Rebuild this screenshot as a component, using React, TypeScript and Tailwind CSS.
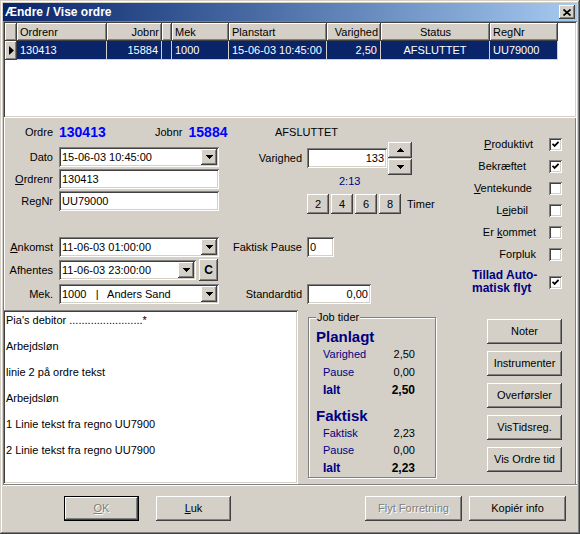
import React from "react";

const RAISED =
  "shadow-[inset_-1px_-1px_#404040,inset_1px_1px_#ffffff,inset_-2px_-2px_#808080,inset_2px_2px_#d4d0c8]";
const SUNKEN =
  "shadow-[inset_1px_1px_#808080,inset_-1px_-1px_#ffffff,inset_2px_2px_#404040,inset_-2px_-2px_#d4d0c8]";
const HEAD =
  "shadow-[inset_-1px_-1px_#404040,inset_1px_1px_#ffffff,inset_-2px_-2px_#808080]";

function Arrow({ up = false }: { up?: boolean }) {
  return (
    <svg width="7" height="4" viewBox="0 0 7 4" shapeRendering="crispEdges">
      <path d={up ? "M3.5 0L7 4H0z" : "M0 0h7L3.5 4z"} fill="#000" />
    </svg>
  );
}

function Btn({
  children,
  className = "",
  disabled = false,
}: {
  children: React.ReactNode;
  className?: string;
  disabled?: boolean;
}) {
  return (
    <div
      className={`flex items-center justify-center bg-[#d4d0c8] ${RAISED} ${
        disabled ? "text-[#808080] [text-shadow:1px_1px_0_#ffffff]" : "text-black"
      } ${className}`}
    >
      {children}
    </div>
  );
}

function Combo({ value, className }: { value: string; className: string }) {
  return (
    <div className={`flex items-center h-[20px] bg-white ${SUNKEN} ${className}`}>
      <span className="flex-1 pl-[3px] whitespace-pre overflow-hidden">{value}</span>
      <div className={`w-[16px] h-[16px] mr-[2px] flex items-center justify-center bg-[#d4d0c8] ${RAISED}`}>
        <Arrow />
      </div>
    </div>
  );
}

function Text({ value, className, right = false }: { value: string; className: string; right?: boolean }) {
  return (
    <div
      className={`flex items-center h-[20px] bg-white px-[3px] ${SUNKEN} ${
        right ? "justify-end" : ""
      } ${className}`}
    >
      {value}
    </div>
  );
}

function Check({ on }: { on: boolean }) {
  return (
    <div className={`w-[13px] h-[13px] bg-white flex items-center justify-center ${SUNKEN}`}>
      {on && (
        <svg width="7" height="7" viewBox="0 0 7 7">
          <path d="M0.5 2.8L2.6 4.9L6.6 0.9" stroke="#000" strokeWidth="1.8" fill="none" />
        </svg>
      )}
    </div>
  );
}

const columns = [
  { w: "w-[90px]", head: "Ordrenr", val: "130413", align: "justify-start" },
  { w: "w-[55px]", head: "Jobnr", val: "15884", align: "justify-end" },
  { w: "w-[10px]", head: "", val: "", align: "justify-start" },
  { w: "w-[57px]", head: "Mek", val: "1000", align: "justify-start" },
  { w: "w-[98px]", head: "Planstart", val: "15-06-03 10:45:00", align: "justify-start" },
  { w: "w-[54px]", head: "Varighed", val: "2,50", align: "justify-end" },
  { w: "w-[109px]", head: "Status", val: "AFSLUTTET", align: "justify-center" },
  { w: "w-[68px]", head: "RegNr", val: "UU79000", align: "justify-start" },
];

const checks = [
  { label: <><u>P</u>roduktivt</>, on: true, mr: "mr-[16px]" },
  { label: <>Bekræftet</>, on: true, mr: "mr-[23px]" },
  { label: <><u>V</u>entekunde</>, on: false, mr: "mr-[17px]" },
  { label: <>L<u>e</u>jebil</>, on: false, mr: "mr-[21px]" },
  { label: <>Er <u>k</u>ommet</>, on: false, mr: "mr-[13px]" },
  { label: <>Forpluk</>, on: false, mr: "mr-[13px]" },
];

const memo = [
  "Pia's debitor ........................*",
  "Arbejdsløn",
  "linie 2 på ordre tekst",
  "Arbejdsløn",
  "1 Linie tekst fra regno UU7900",
  "2 Linie tekst fra regno UU7900",
];

export default function App() {
  return (
    <div className="w-[580px] h-[534px] bg-[#d4d0c8] p-[3px] flex flex-col font-['Liberation_Sans',Arial,sans-serif] text-[11px] text-black leading-none overflow-hidden shadow-[inset_-1px_-1px_#404040,inset_1px_1px_#d4d0c8,inset_-2px_-2px_#808080,inset_2px_2px_#ffffff]">
      {/* title bar */}
      <div className="h-[18px] shrink-0 flex items-center px-[2px] bg-linear-to-r from-[#0a246a] to-[#a6caf0]">
        <span className="text-white font-bold text-[12px]">Ændre / Vise ordre</span>
        <div className={`ml-auto w-[16px] h-[14px] flex items-center justify-center bg-[#d4d0c8] ${RAISED}`}>
          <svg width="8" height="7" viewBox="0 0 8 7">
            <path d="M0.5 0.5L7.5 6.5M7.5 0.5L0.5 6.5" stroke="#000" strokeWidth="1.7" />
          </svg>
        </div>
      </div>

      {/* grid */}
      <div className={`h-[97px] shrink-0 bg-white p-[2px] flex flex-col ${SUNKEN}`}>
        <div className="flex h-[18px]">
          <div className={`w-[12px] bg-[#d4d0c8] ${HEAD}`} />
          {columns.map((c, i) => (
            <div key={i} className={`${c.w} flex items-center px-[3px] bg-[#d4d0c8] ${c.align} ${HEAD}`}>
              {c.head}
            </div>
          ))}
        </div>
        <div className="flex h-[19px]">
          <div className={`w-[12px] bg-[#d4d0c8] flex items-center justify-center ${HEAD}`}>
            <svg width="5" height="9" viewBox="0 0 5 9">
              <path d="M0 0L5 4.5L0 9z" fill="#000" />
            </svg>
          </div>
          {columns.map((c, i) => (
            <div
              key={i}
              className={`${c.w} flex items-center px-[3px] bg-[#0a246a] text-white border-r border-b border-[#d4d0c8] ${c.align}`}
            >
              {c.val}
            </div>
          ))}
        </div>
      </div>

      {/* main panel */}
      <div className="h-[366px] shrink-0 flex flex-col shadow-[inset_1px_0_#808080,inset_2px_0_#ffffff,inset_-1px_0_#ffffff,inset_-2px_0_#808080]">
        <div className="flex h-[186px]">
          <div className="w-[437px] flex flex-col pt-[6px]">
            <div className="flex">
              {/* left column */}
              <div className="w-[227px] flex flex-col">
                <div className="h-[16px] flex items-center">
                  <span className="w-[50px] text-right">Ordre</span>
                  <span className="ml-[6px] w-[96px] font-bold text-[14px] text-[#0000ff]">130413</span>
                  <span>Jobnr</span>
                  <span className="ml-[6px] font-bold text-[14px] text-[#0000ff]">15884</span>
                </div>
                <div className="mt-[7px] h-[20px] flex items-center">
                  <span className="w-[50px] text-right">Dato</span>
                  <Combo value="15-06-03 10:45:00" className="ml-[6px] w-[160px]" />
                </div>
                <div className="mt-[2px] h-[20px] flex items-center">
                  <span className="w-[50px] text-right">
                    <u>O</u>rdrenr
                  </span>
                  <Text value="130413" className="ml-[6px] w-[160px]" />
                </div>
                <div className="mt-[2px] h-[20px] flex items-center">
                  <span className="w-[50px] text-right">RegNr</span>
                  <Text value="UU79000" className="ml-[6px] w-[160px]" />
                </div>
              </div>
              {/* middle column */}
              <div className="flex flex-col">
                <div className="h-[16px] flex items-center pl-[45px]">AFSLUTTET</div>
                <div className="mt-[1px] h-[34px] flex items-center">
                  <span className="w-[72px] text-right">Varighed</span>
                  <Text value="133" right className="ml-[5px] w-[80px]" />
                  <div className="ml-[1px] w-[24px] flex flex-col gap-[1px]">
                    <Btn className="h-[16px]">
                      <Arrow up />
                    </Btn>
                    <Btn className="h-[16px]">
                      <Arrow />
                    </Btn>
                  </div>
                </div>
                <div className="h-[12px] flex items-center pl-[109px] text-[#000080]">2:13</div>
                <div className="mt-[7px] h-[20px] flex items-center pl-[77px] gap-[2px]">
                  {["2", "4", "6", "8"].map((n) => (
                    <Btn key={n} className="w-[22px] h-[20px]">
                      {n}
                    </Btn>
                  ))}
                  <span className="ml-[4px]">Timer</span>
                </div>
              </div>
            </div>

            <div className="mt-[23px] h-[20px] flex items-center">
              <span className="w-[50px] text-right">
                <u>A</u>nkomst
              </span>
              <Combo value="11-06-03 01:00:00" className="ml-[6px] w-[160px]" />
              <span className="ml-[11px] w-[72px] text-right">Faktisk Pause</span>
              <Text value="0" className="ml-[5px] w-[27px]" />
            </div>
            <div className="mt-[2px] h-[22px] flex items-center">
              <span className="w-[50px] text-right">Afhentes</span>
              <Combo value="11-06-03 23:00:00" className="ml-[6px] w-[137px]" />
              <Btn className="ml-[3px] w-[19px] h-[22px] font-bold text-[12px]">C</Btn>
            </div>
            <div className="mt-[3px] h-[20px] flex items-center">
              <span className="w-[50px] text-right">Mek.</span>
              <Combo value="1000   |   Anders Sand" className="ml-[6px] w-[160px]" />
              <span className="ml-[11px] w-[72px] text-right">Standardtid</span>
              <Text value="0,00" right className="ml-[5px] w-[64px]" />
            </div>
          </div>

          {/* checkbox column */}
          <div className="flex-1 flex flex-col pt-[15px]">
            {checks.map((c, i) => (
              <div key={i} className="h-[22px] flex items-center justify-end pr-[15px]">
                <span className={c.mr}>{c.label}</span>
                <Check on={c.on} />
              </div>
            ))}
            <div className="mt-[4px] h-[26px] flex items-center pl-[32px] pr-[15px]">
              <div className="flex-1 font-bold text-[12px] leading-[13px] text-[#000080]">
                Tillad Auto-
                <br />
                matisk flyt
              </div>
              <Check on />
            </div>
          </div>
        </div>

        <div className="mt-[6px] h-[174px] flex">
          <div className={`w-[295px] h-[174px] bg-white pt-[2px] pl-[3px] flex flex-col gap-[10px] ${SUNKEN}`}>
            {memo.map((m, i) => (
              <div key={i} className="h-[16px] flex items-center">
                {m}
              </div>
            ))}
          </div>

          <div className="relative ml-[10px] mt-[7px] w-[128px] h-[161px] border border-[#808080] shadow-[inset_1px_1px_#ffffff,1px_1px_#ffffff] flex flex-col pt-[9px]">
            <span className="absolute -top-[6px] left-[7px] px-[1px] bg-[#d4d0c8]">Job tider</span>
            <div className="h-[18px] flex items-center pl-[7px] font-bold text-[15px] text-[#000080]">Planlagt</div>
            <div className="h-[18px] flex items-center justify-between pl-[14px] pr-[20px]">
              <span className="text-[#000080]">Varighed</span>
              <span>2,50</span>
            </div>
            <div className="h-[18px] flex items-center justify-between pl-[14px] pr-[20px]">
              <span className="text-[#000080]">Pause</span>
              <span>0,00</span>
            </div>
            <div className="h-[18px] flex items-center justify-between pl-[14px] pr-[20px] font-bold text-[12px]">
              <span className="text-[#000080]">Ialt</span>
              <span>2,50</span>
            </div>
            <div className="mt-[7px] h-[18px] flex items-center pl-[7px] font-bold text-[15px] text-[#000080]">Faktisk</div>
            <div className="h-[18px] flex items-center justify-between pl-[14px] pr-[20px]">
              <span className="text-[#000080]">Faktisk</span>
              <span>2,23</span>
            </div>
            <div className="h-[17px] flex items-center justify-between pl-[14px] pr-[20px]">
              <span className="text-[#000080]">Pause</span>
              <span>0,00</span>
            </div>
            <div className="h-[17px] flex items-center justify-between pl-[14px] pr-[20px] font-bold text-[12px]">
              <span className="text-[#000080]">Ialt</span>
              <span>2,23</span>
            </div>
          </div>

          <div className="ml-[51px] mt-[9px] w-[75px] flex flex-col gap-[7px]">
            {["Noter", "Instrumenter", "Overførsler", "VisTidsreg.", "Vis Ordre tid"].map((b) => (
              <Btn key={b} className="h-[25px]">
                {b}
              </Btn>
            ))}
          </div>
        </div>
      </div>

      <div className="h-[2px] shrink-0 border-t border-b border-t-[#808080] border-b-white" />

      {/* bottom buttons */}
      <div className="h-[45px] shrink-0 flex items-start pt-[10px]">
        <div className="ml-[61px] w-[75px] h-[25px] border border-black flex">
          <Btn disabled className="flex-1">
            <u>O</u>K
          </Btn>
        </div>
        <Btn className="ml-[17px] w-[75px] h-[25px]">
          <u>L</u>uk
        </Btn>
        <Btn disabled className="ml-[134px] w-[97px] h-[25px]">
          Flyt Forretning
        </Btn>
        <Btn className="ml-[7px] w-[97px] h-[25px]">Kopiér info</Btn>
      </div>
    </div>
  );
}
